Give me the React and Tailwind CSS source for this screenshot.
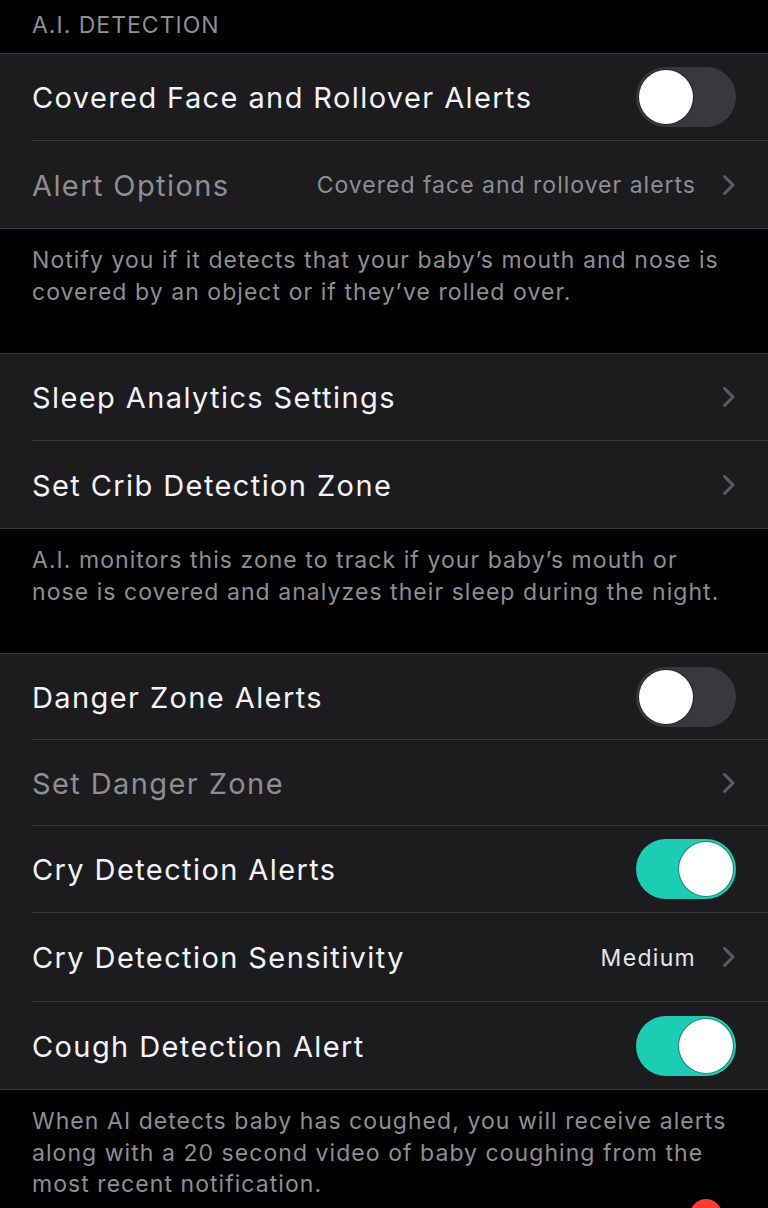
import React from "react";

const font = { fontFamily: "Inter, 'Noto Sans', sans-serif" };

function Toggle({ on }) {
  return (
    <div
      className={`relative w-[100px] h-[60px] rounded-full shrink-0 ${
        on ? "bg-[#1ccdb3]" : "bg-[#39393d]"
      }`}
    >
      <div
        className={`absolute top-[3px] w-[54px] h-[54px] rounded-full bg-white shadow-[0_0_0_1px_rgba(0,0,0,0.35)] ${
          on ? "left-[43px]" : "left-[3px]"
        }`}
      />
    </div>
  );
}

function Chevron() {
  return (
    <svg width="14" height="22" viewBox="0 0 14 22" className="shrink-0">
      <path
        d="M2.5 2.5 L11 11 L2.5 19.5"
        fill="none"
        stroke="#5c5c61"
        strokeWidth="3"
        strokeLinecap="round"
        strokeLinejoin="round"
      />
    </svg>
  );
}

function Row({ title, dim, toggle, value, valueLight, chevron, last, h = "h-[87px]" }) {
  return (
    <div className="pl-8">
      <div
        className={`${h} flex items-center pr-8 ${
          last ? "" : "border-b border-[#38383a]"
        }`}
      >
        <div
          className={`flex-1 text-[29px] tracking-[1.4px] pt-[2px] ${
            dim ? "text-[#8e8e93]" : "text-[#f2f2f7]"
          }`}
        >
          {title}
        </div>
        {value && (
          <div
            className={`text-[23px] mr-[26px] pt-[2px] ${
              valueLight ? "text-[#e5e5ea] tracking-[1.3px]" : "text-[#8e8e93] tracking-[1px]"
            }`}
          >
            {value}
          </div>
        )}
        {chevron && <Chevron />}
        {toggle !== undefined && <Toggle on={toggle} />}
      </div>
    </div>
  );
}

function Section({ children }) {
  return (
    <div className="bg-[#1c1c1e] border-t border-b border-[#38383a]">{children}</div>
  );
}

function Footer({ children, h }) {
  return (
    <div
      className={`px-8 pt-[16px] text-[23px] leading-[31.5px] tracking-[1.05px] text-[#8e8e93] ${h}`}
    >
      {children}
    </div>
  );
}

export default function App() {
  return (
    <div className="w-[768px] h-[1208px] bg-black overflow-hidden relative" style={font}>
      <div className="h-[53px] px-8 flex items-center pb-[2px] text-[23px] text-[#8e8e93] tracking-[1px]">
        A.I. DETECTION
      </div>
      <Section>
        <Row title="Covered Face and Rollover Alerts" toggle={false} />
        <Row
          title="Alert Options"
          dim
          value="Covered face and rollover alerts"
          chevron
          last
        />
      </Section>
      <Footer h="h-[124px]">
        Notify you if it detects that your baby’s mouth and nose is covered by an
        object or if they’ve rolled over.
      </Footer>
      <Section>
        <Row title="Sleep Analytics Settings" chevron />
        <Row title="Set Crib Detection Zone" chevron last />
      </Section>
      <Footer h="h-[124px]">
        A.I. monitors this zone to track if your baby’s mouth or nose is covered
        and analyzes their sleep during the night.
      </Footer>
      <Section>
        <Row title="Danger Zone Alerts" toggle={false} h="h-[86px]" />
        <Row title="Set Danger Zone" dim chevron h="h-[86px]" />
        <Row title="Cry Detection Alerts" toggle={true} />
        <Row
          title="Cry Detection Sensitivity"
          value="Medium"
          valueLight
          chevron
          h="h-[89px]"
        />
        <Row title="Cough Detection Alert" toggle={true} last />
      </Section>
      <Footer h="h-[110px]">
        When AI detects baby has coughed, you will receive alerts along with a 20
        second video of baby coughing from the most recent notification.
      </Footer>
      <div className="absolute left-[690px] top-[1199px] w-[32px] h-[32px] rounded-full bg-[#ff3b30]" />
    </div>
  );
}
